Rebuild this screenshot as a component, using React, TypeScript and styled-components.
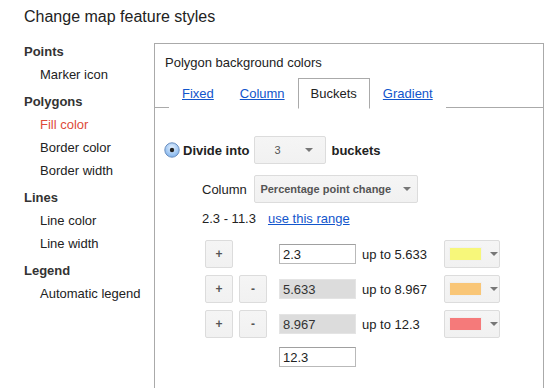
import styled, { createGlobalStyle } from "styled-components";

const GlobalStyle = createGlobalStyle`
  html, body {
    margin: 0;
    padding: 0;
    background: #fff;
  }
  body {
    font-family: "Liberation Sans", Arial, sans-serif;
    font-size: 13px;
    color: #222;
  }
`;

const Page = styled.div`
  width: 556px;
  height: 388px;
  overflow: hidden;
`;

const Title = styled.h1`
  margin: 0;
  padding: 7px 0 0 24px;
  height: 33px;
  font-size: 16px;
  line-height: 20px;
  font-weight: normal;
  color: #222;
`;

const Main = styled.div`
  display: flex;
  align-items: flex-start;
`;

const Sidebar = styled.nav`
  width: 130px;
  padding-left: 24px;
  display: flex;
  flex-direction: column;
`;

const NavHeading = styled.div`
  font-weight: bold;
  color: #333;
  line-height: 23px;
  margin-top: 4px;

  &:first-child {
    margin-top: 0;
  }
`;

const NavItem = styled.a<{ $active?: boolean }>`
  display: block;
  padding-left: 16px;
  line-height: 23px;
  color: ${(p) => (p.$active ? "#dd4b39" : "#222")};
  text-decoration: none;
  cursor: pointer;
`;

const Panel = styled.section`
  margin-top: 3px;
  width: 388px;
  height: 360px;
  border: 1px solid #aaa;
  border-bottom: none;
`;

const PanelTitle = styled.div`
  padding: 9px 0 0 10px;
  line-height: 20px;
  color: #222;
`;

const TabBar = styled.div`
  margin-top: 5px;
  height: 29px;
  padding-left: 14px;
  display: flex;
  border-bottom: 1px solid #aaa;
`;

const Tab = styled.a<{ $active?: boolean }>`
  display: flex;
  align-items: center;
  padding: 0 12px;
  height: 29px;
  border: 1px solid ${(p) => (p.$active ? "#aaa" : "transparent")};
  border-bottom: ${(p) => (p.$active ? "1px solid #fff" : "none")};
  background: #fff;
  color: ${(p) => (p.$active ? "#222" : "#1155cc")};
  text-decoration: ${(p) => (p.$active ? "none" : "underline")};
  cursor: pointer;
`;

const Content = styled.div`
  padding: 28px 0 0 9px;
  display: flex;
  flex-direction: column;
`;

const RadioRow = styled.label`
  display: flex;
  align-items: center;
  height: 28px;
  font-weight: bold;
  color: #222;
`;

const RadioText = styled.span`
  margin: 0 5px 0 3px;
`;

const SelectBox = styled.div<{ $width: number }>`
  box-sizing: border-box;
  width: ${(p) => p.$width}px;
  height: 28px;
  display: flex;
  align-items: center;
  justify-content: center;
  gap: 12px;
  background: linear-gradient(#f5f5f5, #f1f1f1);
  border: 1px solid #dcdcdc;
  border-radius: 2px;
  font-size: 11px;
  font-weight: bold;
  color: #555;
`;

const SmallSelectValue = styled.span`
  font-weight: normal;
  width: 20px;
  text-align: center;
  margin-right: 6px;
`;

const Caret = styled.span`
  width: 0;
  height: 0;
  border-left: 4px solid transparent;
  border-right: 4px solid transparent;
  border-top: 4px solid #777;
`;

const AfterSelect = styled.span`
  margin-left: 5px;
`;

const Indented = styled.div`
  padding-left: 38px;
  display: flex;
  align-items: center;
`;

const ColumnRow = styled(Indented)`
  margin-top: 11px;
  gap: 7px;
  height: 28px;
`;

const RangeRow = styled(Indented)`
  margin-top: 5px;
  height: 20px;
  gap: 12px;
`;

const Link = styled.a`
  color: #1155cc;
  text-decoration: underline;
  cursor: pointer;
`;

const Buckets = styled.div`
  margin-top: 12px;
  padding-left: 41px;
  display: flex;
  flex-direction: column;
  gap: 7px;
`;

const BucketRow = styled.div`
  display: flex;
  align-items: center;
  height: 28px;
`;

const LastRow = styled.div`
  display: flex;
  align-items: center;
  margin-top: 2px;
  padding-left: 68px;
`;

const SmallButton = styled.button`
  box-sizing: border-box;
  width: 28px;
  height: 28px;
  margin-right: 6px;
  padding: 0;
  background: linear-gradient(#f5f5f5, #f1f1f1);
  border: 1px solid #dcdcdc;
  border-radius: 2px;
  font-family: "Liberation Sans", Arial, sans-serif;
  font-size: 12px;
  font-weight: bold;
  color: #555;
`;

const ButtonSpacer = styled.span`
  width: 34px;
`;

const NumberInput = styled.input<{ $disabled?: boolean }>`
  box-sizing: border-box;
  width: 77px;
  height: 20px;
  margin-left: 6px;
  padding: 0 0 0 3px;
  border: 1px solid ${(p) => (p.$disabled ? "#e4e4e4" : "#b9b9b9")};
  border-top-color: ${(p) => (p.$disabled ? "#e4e4e4" : "#a0a0a0")};
  background: ${(p) => (p.$disabled ? "#dcdcdc" : "#fff")};
  font-family: "Liberation Sans", Arial, sans-serif;
  font-size: 13px;
  color: ${(p) => (p.$disabled ? "#333" : "#222")};
  outline: none;
`;

const UpTo = styled.span`
  width: 82px;
  margin-left: 6px;
`;

const ColorSelect = styled.div`
  box-sizing: border-box;
  width: 56px;
  height: 28px;
  display: flex;
  align-items: center;
  padding-left: 4px;
  gap: 8px;
  background: linear-gradient(#f5f5f5, #f1f1f1);
  border: 1px solid #dcdcdc;
  border-radius: 2px;
`;

const Swatch = styled.span<{ $color: string }>`
  width: 31px;
  height: 12px;
  background: ${(p) => p.$color};
  border: 1px solid #f0f0f0;
`;

const RadioIcon = () => (
  <svg width="16" height="16" viewBox="0 0 16 16">
    <defs>
      <radialGradient id="rg" cx="50%" cy="35%" r="65%">
        <stop offset="0%" stopColor="#e6f2ff" />
        <stop offset="100%" stopColor="#7fb2ec" />
      </radialGradient>
    </defs>
    <circle cx="8" cy="8" r="7.2" fill="url(#rg)" stroke="#6b8fbf" strokeWidth="1" />
    <circle cx="8" cy="8" r="2.2" fill="#222" />
  </svg>
);

const rows = [
  { from: "2.3", to: "5.633", color: "#f7f77a", minus: false, disabled: false },
  { from: "5.633", to: "8.967", color: "#f9c677", minus: true, disabled: true },
  { from: "8.967", to: "12.3", color: "#f57a7a", minus: true, disabled: true },
];

export default function App() {
  return (
    <Page>
      <GlobalStyle />
      <Title>Change map feature styles</Title>
      <Main>
        <Sidebar>
          <NavHeading>Points</NavHeading>
          <NavItem>Marker icon</NavItem>
          <NavHeading>Polygons</NavHeading>
          <NavItem $active>Fill color</NavItem>
          <NavItem>Border color</NavItem>
          <NavItem>Border width</NavItem>
          <NavHeading>Lines</NavHeading>
          <NavItem>Line color</NavItem>
          <NavItem>Line width</NavItem>
          <NavHeading>Legend</NavHeading>
          <NavItem>Automatic legend</NavItem>
        </Sidebar>
        <Panel>
          <PanelTitle>Polygon background colors</PanelTitle>
          <TabBar>
            <Tab>Fixed</Tab>
            <Tab>Column</Tab>
            <Tab $active>Buckets</Tab>
            <Tab>Gradient</Tab>
          </TabBar>
          <Content>
            <RadioRow>
              <RadioIcon />
              <RadioText>Divide into</RadioText>
              <SelectBox $width={72}>
                <SmallSelectValue>3</SmallSelectValue>
                <Caret />
              </SelectBox>
              <AfterSelect>buckets</AfterSelect>
            </RadioRow>
            <ColumnRow>
              <span>Column</span>
              <SelectBox $width={164}>
                <span>Percentage point change</span>
                <Caret />
              </SelectBox>
            </ColumnRow>
            <RangeRow>
              <span>2.3 - 11.3</span>
              <Link>use this range</Link>
            </RangeRow>
            <Buckets>
              {rows.map((r) => (
                <BucketRow key={r.from}>
                  <SmallButton>+</SmallButton>
                  {r.minus ? <SmallButton>-</SmallButton> : <ButtonSpacer />}
                  <NumberInput
                    $disabled={r.disabled}
                    disabled={r.disabled}
                    defaultValue={r.from}
                  />
                  <UpTo>up to {r.to}</UpTo>
                  <ColorSelect>
                    <Swatch $color={r.color} />
                    <Caret />
                  </ColorSelect>
                </BucketRow>
              ))}
              <LastRow>
                <NumberInput defaultValue="12.3" />
              </LastRow>
            </Buckets>
          </Content>
        </Panel>
      </Main>
    </Page>
  );
}
